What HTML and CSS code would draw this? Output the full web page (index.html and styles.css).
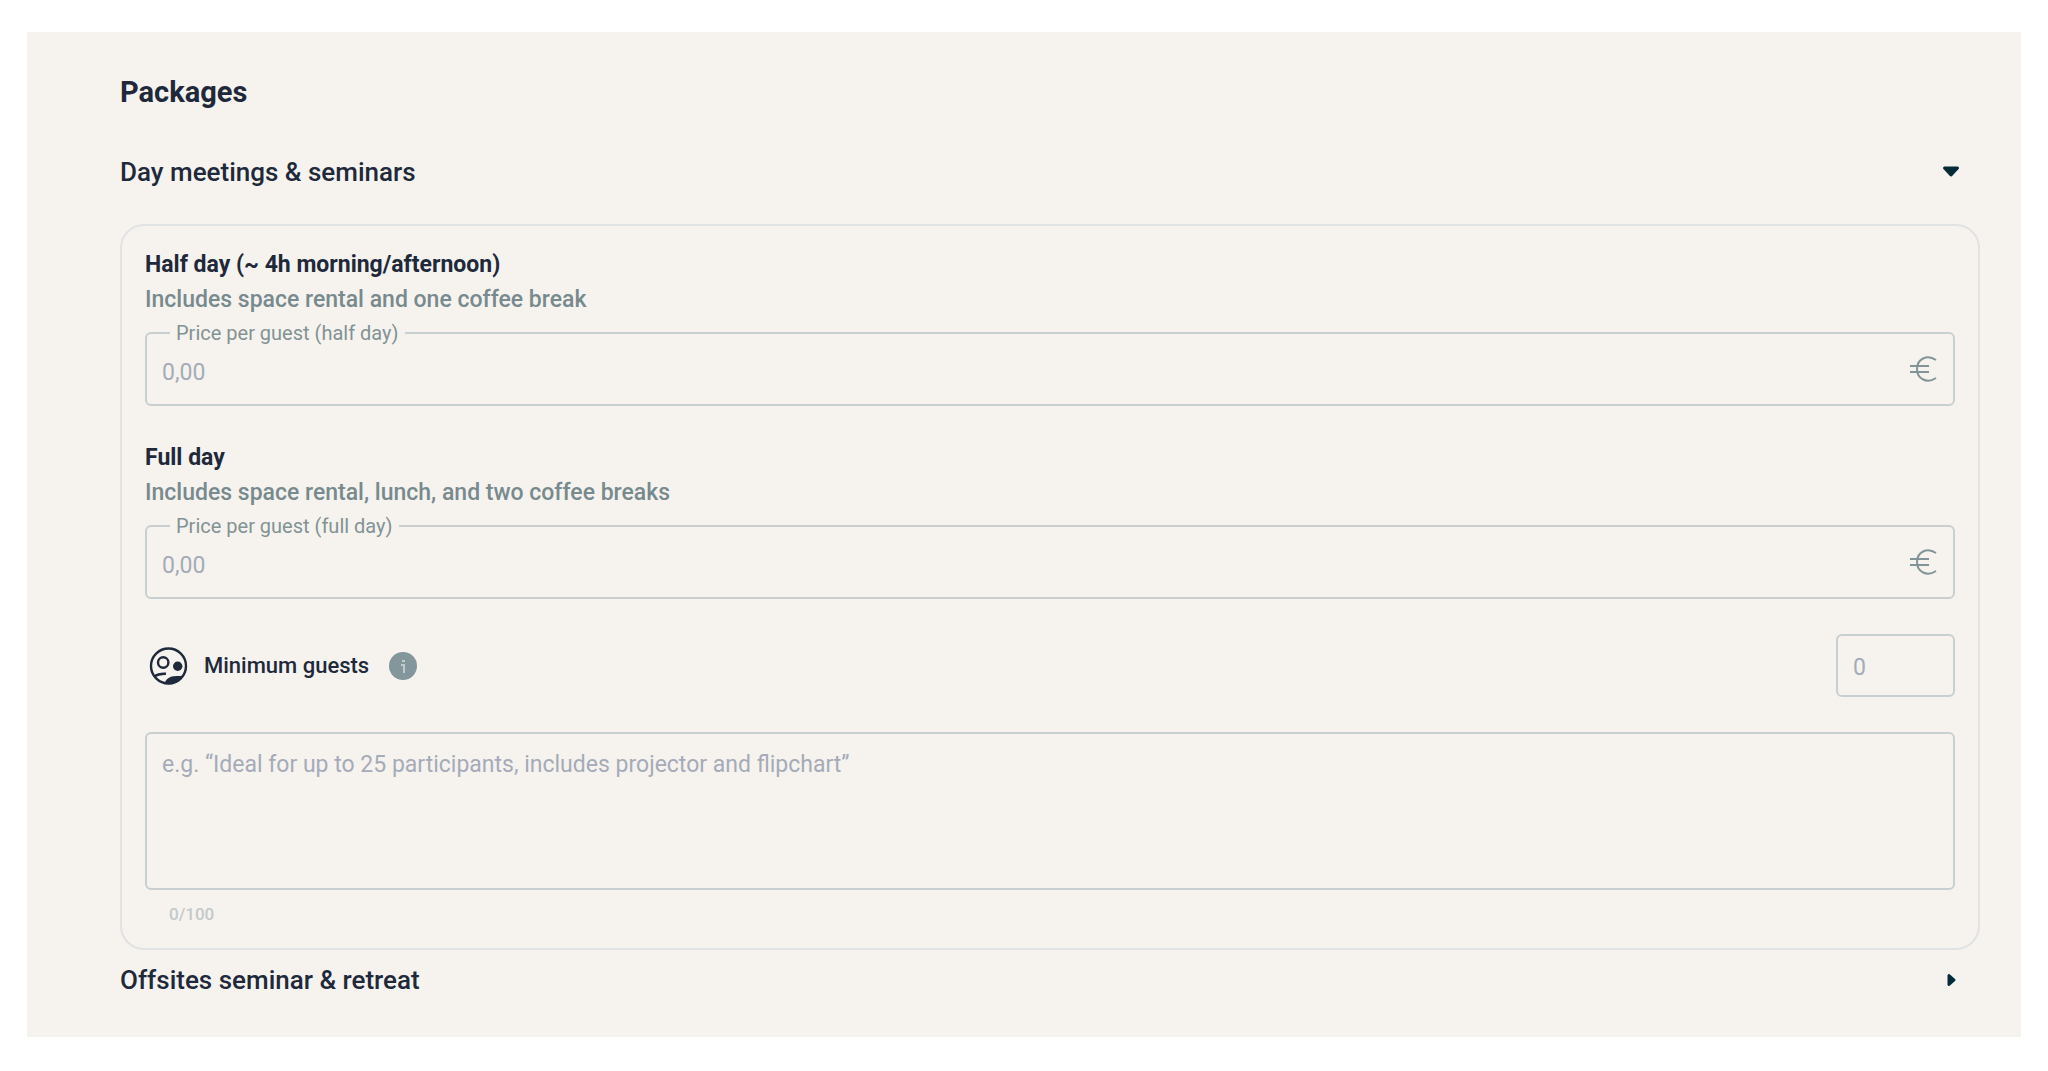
FILE: index.html
```html
<!DOCTYPE html>
<html lang="en">
<head>
  <meta charset="UTF-8">
  <meta name="viewport" content="width=device-width, initial-scale=1.0">
  <title>Packages</title>
  <link rel="stylesheet" href="styles.css">
</head>
<body>
  <main class="panel">
    <h1>Packages</h1>

    <button type="button" class="accordion" aria-expanded="true" aria-controls="dayPackages">
      Day meetings &amp; seminars
      <svg class="arrow" viewBox="0 0 20 20" aria-hidden="true">
        <path d="M3.500 6h13L10 13z"/>
      </svg>
    </button>

    <form class="card" id="dayPackages">
      <section>
        <h2>Half day (~ 4h morning/afternoon)</h2>
        <p class="hint">Includes space rental and one coffee break</p>
        <fieldset class="price">
          <legend><label for="halfDay">Price per guest (half day)</label></legend>
          <div class="price-row">
            <input type="text" id="halfDay" inputmode="decimal" placeholder="0,00">
            <svg class="euro" viewBox="0 0 28 28" aria-hidden="true">
              <path d="M27 5C18 -1 8 4 8 14s10 15 19 9M1 11h19M1 17h19"/>
            </svg>
          </div>
        </fieldset>
      </section>

      <section>
        <h2>Full day</h2>
        <p class="hint">Includes space rental, lunch, and two coffee breaks</p>
        <fieldset class="price">
          <legend><label for="fullDay">Price per guest (full day)</label></legend>
          <div class="price-row">
            <input type="text" id="fullDay" inputmode="decimal" placeholder="0,00">
            <svg class="euro" viewBox="0 0 28 28" aria-hidden="true">
              <path d="M27 5C18 -1 8 4 8 14s10 15 19 9M1 11h19M1 17h19"/>
            </svg>
          </div>
        </fieldset>
      </section>

      <div class="guests">
        <svg class="guests-icon" viewBox="0 0 40 40" aria-hidden="true">
          <circle class="line" cx="19.500" cy="20" r="17.500"/>
          <circle class="line" cx="14.200" cy="16.500" r="5.200"/>
          <circle cx="28.700" cy="20.200" r="4.700"/>
          <path class="line" d="M5 30.500c3-2 7-3 12-2.700"/>
          <path d="M15.500 37.500c1-4 5-7.500 12-7.500 3.500 0 5.500 0 7.500-1-3 6.500-11 11-19.500 8.500z"/>
        </svg>
        <label for="minGuests">Minimum guests</label>
        <button type="button" class="info" aria-label="About minimum guests">
          <svg viewBox="0 0 28 28" aria-hidden="true">
            <path d="M13 8h3v2h-3zM12 12h4v9h-2v-7h-2z"/>
          </svg>
        </button>
        <input type="text" id="minGuests" inputmode="numeric" placeholder="0">
      </div>

      <div class="notes">
        <textarea id="notes" maxlength="100" aria-label="Package description" placeholder="e.g. “Ideal for up to 25 participants, includes projector and flipchart”"></textarea>
        <p class="counter">0/100</p>
      </div>
    </form>

    <button type="button" class="accordion" aria-expanded="false">
      Offsites seminar &amp; retreat
      <svg class="arrow" viewBox="0 0 20 20" aria-hidden="true">
        <path d="M8 5.500v9L13 10z"/>
      </svg>
    </button>
  </main>
</body>
</html>
```
FILE: styles.css
```css
* {
  box-sizing: border-box;
}
body {
  margin: 0;
  background: #fff;
  color: #1e293b;
  font-family: Roboto, "Liberation Sans", sans-serif;
  font-size: 23px;
}
h1, h2, p {
  margin: 0;
}
input, textarea, button {
  font: inherit;
  color: inherit;
}
.panel {
  margin: 32px 27px;
  padding: 42px 41px 27px 93px;
  background: #f6f3ee;
}
h1 {
  margin-bottom: 32px;
  font-size: 29px;
  line-height: 36px;
  font-weight: 700;
}
.accordion {
  display: flex;
  align-items: center;
  justify-content: space-between;
  width: 100%;
  height: 60px;
  padding: 0 19px 0 0;
  border: 0;
  background: none;
  font-size: 26px;
  font-weight: 500;
  text-align: left;
  cursor: pointer;
}
.arrow {
  width: 20px;
  height: 20px;
  fill: #042c38;
  stroke: #042c38;
  stroke-width: 3px;
  stroke-linejoin: round;
}
.card {
  display: flex;
  flex-direction: column;
  gap: 34px;
  margin-top: 22px;
  padding: 21px 23px 22px;
  border: 2px solid #e0e2e3;
  border-radius: 24px;
}
h2 {
  font-size: 23px;
  line-height: 35px;
  font-weight: 700;
}
.hint {
  color: #778a8e;
  line-height: 35px;
  font-weight: 500;
}

/* outlined price field, the label sits in the border */
.price {
  min-width: 0;
  margin: 4px 0 0;
  padding: 0 16px 5px 15px;
  border: 2px solid #c8cfd1;
  border-radius: 6px;
}
.price legend {
  margin-left: 8px;
  padding: 0 6px;
  color: #829295;
  font-size: 20px;
  line-height: 24px;
}
.price-row {
  display: flex;
  align-items: center;
}
.price input {
  flex: 1;
  min-width: 0;
  height: 54px;
  padding: 0;
  border: 0;
  background: none;
  outline: 0;
}
.euro {
  width: 28px;
  height: 28px;
  margin-bottom: 6px;
  fill: none;
  stroke: #829498;
  stroke-width: 2px;
}
::placeholder {
  color: #a5abb9;
  opacity: 1;
}

.guests {
  display: flex;
  align-items: center;
  height: 65px;
}
.guests label {
  font-size: 22px;
  font-weight: 500;
}
.guests-icon {
  width: 40px;
  height: 40px;
  margin: 0 15px 0 4px;
  fill: #1e293b;
}
.guests-icon .line {
  fill: none;
  stroke: #1e293b;
  stroke-width: 2.4px;
}
.info {
  width: 28px;
  height: 28px;
  margin-left: 20px;
  padding: 0;
  border: 0;
  border-radius: 50%;
  background: #82969c;
  cursor: pointer;
}
.info svg {
  display: block;
  fill: #c0cacc;
}
.guests input {
  width: 119px;
  height: 63px;
  margin-left: auto;
  padding: 4px 15px 0;
  border: 2px solid #c8cfd1;
  border-radius: 6px;
  background: none;
}
.notes textarea {
  display: block;
  width: 100%;
  height: 158px;
  padding: 16px 15px;
  border: 2px solid #c8cfd1;
  border-radius: 6px;
  background: none;
  line-height: 30px;
  resize: none;
}
.counter {
  margin: 12px 24px 0;
  color: #c2cacc;
  font-size: 17px;
  line-height: 24px;
  font-weight: 500;
}
```
